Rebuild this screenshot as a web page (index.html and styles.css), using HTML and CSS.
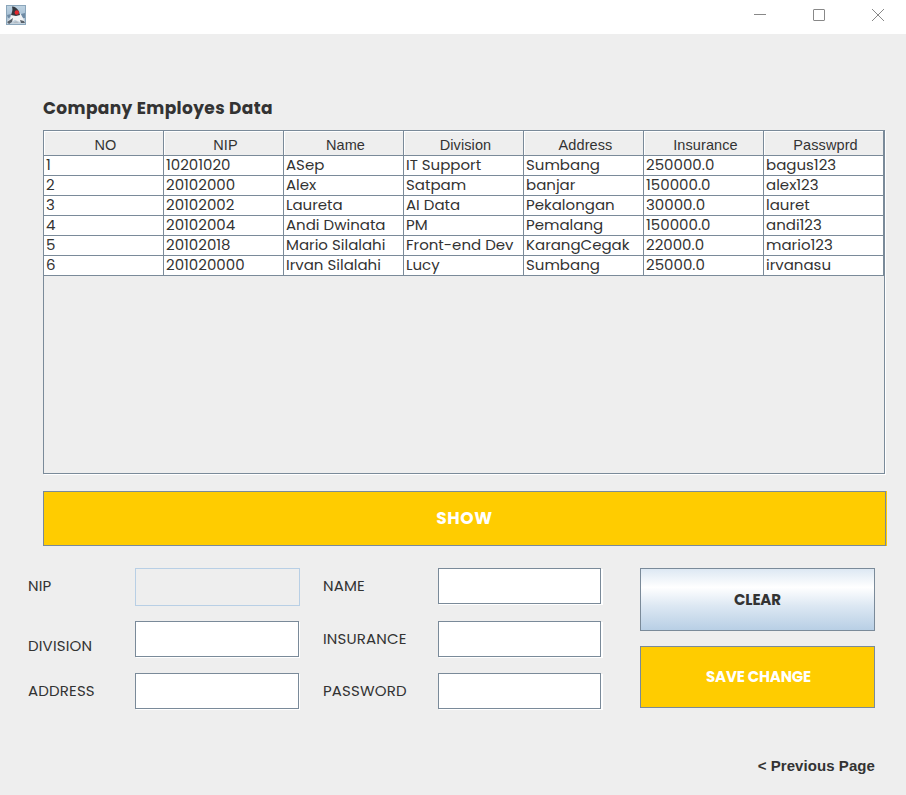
FILE: index.html
```html
<!DOCTYPE html>
<html lang="en">
<head>
<meta charset="utf-8">
<title>Company Employes Data</title>
<link rel="stylesheet" href="styles.css">
</head>
<body>
<header class="titlebar">
  <svg class="app-icon" width="20" height="20" viewBox="0 0 20 20">
    <defs><linearGradient id="bg" x2="0" y2="1"><stop offset="0" stop-color="#bfd3e2"/><stop offset=".5" stop-color="#a9c2d6"/><stop offset="1" stop-color="#c9d5df"/></linearGradient></defs>
    <rect x=".5" y=".5" width="19" height="19" fill="url(#bg)" stroke="#8ba6bb"/>
    <path d="M1 10l4-1 1 3-4 1zM15 9l4-1v5l-3 0z" fill="#6f8ba5"/>
    <path d="M5 9l9-1 3 5 2 5-5-1-5-2-5 3-3-1 3-3z" fill="#f2f3f4"/>
    <path d="M6 1.500c3 0 5 1.500 7 5l1 3.500-4 1-5-1c1-3 2-5 1-8.500z" fill="#34383f"/>
    <path d="M1 17l6-4-1 4-3 2zM14 15l4 1 1 2-4 0z" fill="#59616a"/>
    <path d="M7 18l3-2 3 2z" fill="#b4bbc2"/>
    <circle cx="10.800" cy="7.500" r="2.200" fill="#e5272c"/>
  </svg>
  <div class="controls">
    <svg width="12" height="12" viewBox="0 0 12 12"><path d="M0 5.500h12"/></svg>
    <svg width="12" height="12" viewBox="0 0 12 12"><rect x=".5" y=".5" width="11" height="11" rx=".5"/></svg>
    <svg width="12" height="12" viewBox="0 0 12 12"><path d="M0 0l12 12M12 0L0 12"/></svg>
  </div>
</header>
<main>
  <h1>Company Employes Data</h1>
  <div class="table-pane">
    <table>
      <thead><tr><th>NO</th><th>NIP</th><th>Name</th><th>Division</th><th>Address</th><th>Insurance</th><th>Passwprd</th></tr></thead>
      <tbody>
        <tr><td>1</td><td>10201020</td><td>ASep</td><td>IT Support</td><td>Sumbang</td><td>250000.0</td><td>bagus123</td></tr>
        <tr><td>2</td><td>20102000</td><td>Alex</td><td>Satpam</td><td>banjar</td><td>150000.0</td><td>alex123</td></tr>
        <tr><td>3</td><td>20102002</td><td>Laureta</td><td>AI Data</td><td>Pekalongan</td><td>30000.0</td><td>lauret</td></tr>
        <tr><td>4</td><td>20102004</td><td>Andi Dwinata</td><td>PM</td><td>Pemalang</td><td>150000.0</td><td>andi123</td></tr>
        <tr><td>5</td><td>20102018</td><td>Mario Silalahi</td><td>Front-end Dev</td><td>KarangCegak</td><td>22000.0</td><td>mario123</td></tr>
        <tr><td>6</td><td>201020000</td><td>Irvan Silalahi</td><td>Lucy</td><td>Sumbang</td><td>25000.0</td><td>irvanasu</td></tr>
      </tbody>
    </table>
  </div>
  <button class="btn gold show">SHOW</button>
  <div class="form">
    <div class="fields left">
      <label for="nip">NIP</label><input id="nip" class="disabled" disabled>
      <label for="division" class="low">DIVISION</label><input id="division">
      <label for="address">ADDRESS</label><input id="address">
    </div>
    <div class="fields right">
      <label for="name">NAME</label><input id="name">
      <label for="insurance">INSURANCE</label><input id="insurance">
      <label for="password">PASSWORD</label><input id="password">
    </div>
    <div class="actions">
      <button class="btn clear">CLEAR</button>
      <button class="btn gold save">SAVE CHANGE</button>
    </div>
  </div>
  <footer><a>&lt; Previous Page</a></footer>
</main>
</body>
</html>
```
FILE: styles.css
```css
* { box-sizing: border-box; }
body {
  margin: 0;
  height: 795px;
  overflow: hidden;
  background: #eee;
  color: #333;
  font-family: Poppins, Inter, "Liberation Sans", sans-serif;
}
.titlebar {
  display: flex;
  justify-content: space-between;
  height: 34px;
  padding: 5px 22px 0 6px;
  background: #fff;
}
.controls { display: flex; gap: 47px; padding-top: 4px; }
.controls svg { fill: none; stroke: #888; stroke-width: 1; }
h1 {
  margin: 0 0 0 43px;
  padding-top: 60px;
  height: 96px;
  font-size: 17px;
  line-height: 28px;
  font-weight: 700;
  letter-spacing: .38px;
}
.table-pane {
  width: 842px;
  height: 344px;
  margin-left: 43px;
  border: 1px solid #7a8a99;
  box-shadow: 1px 1px #fff;
}
table { border-collapse: separate; border-spacing: 0; table-layout: fixed; width: 840px; }
th, td { padding: 0; border: 0 solid #7a8a99; border-width: 0 1px 1px 0; white-space: nowrap; }
th {
  height: 25px;
  padding: 3px 0 0 4px;
  box-shadow: inset 1px 1px #fff;
  font: 14.5px/20px "Liberation Sans", sans-serif;
  letter-spacing: .1px;
}
td { height: 20px; padding: 0 0 2px 2px; background: #fff; font-size: 15px; line-height: 17px; }
.btn {
  display: block;
  padding: 0;
  border: 1px solid #7a8a99;
  color: #333;
  font-family: inherit;
  font-size: 15px;
  font-weight: 700;
  letter-spacing: -.15px;
}
.gold { padding-bottom: 2px; background: #fc0; color: #fff; }
.show {
  width: 843px;
  height: 55px;
  margin: 17px 0 0 43px;
  box-shadow: 1px 0 #fc0;
  font-size: 17px;
  letter-spacing: .6px;
}
.form { display: flex; padding: 22px 0 0 28px; }
.fields { display: grid; align-content: start; grid-template-rows: 53px 52px 36px; }
.left { grid-template-columns: 107px 188px; }
.right { grid-template-columns: 115px 202px; }
label { font-size: 15px; line-height: 36px; letter-spacing: .15px; }
.low { padding-top: 7px; }
input {
  width: 164px;
  height: 36px;
  padding: 0 4px;
  border: 1px solid #7a8a99;
  border-radius: 0;
  background: #fff;
  box-shadow: 1px 1px #fff;
}
.right input { box-shadow: 1px 1px #fff, 2px 1px #fff; }
.right input { width: 163px; }
input.disabled { width: 165px; height: 38px; border-color: #b8cfe5; background: #eee; box-shadow: none; }
.actions { display: grid; gap: 15px; align-content: start; }
.clear { width: 235px; height: 63px; background: linear-gradient(#dde8f3, #fff 30%, #dde8f3 60%, #b8cfe5); }
.save { width: 235px; height: 62px; padding-left: 2px; }
footer { padding: 45px 31px 0 0; text-align: right; font: bold 15px/24px "Liberation Sans", sans-serif; letter-spacing: .07px; }
```
